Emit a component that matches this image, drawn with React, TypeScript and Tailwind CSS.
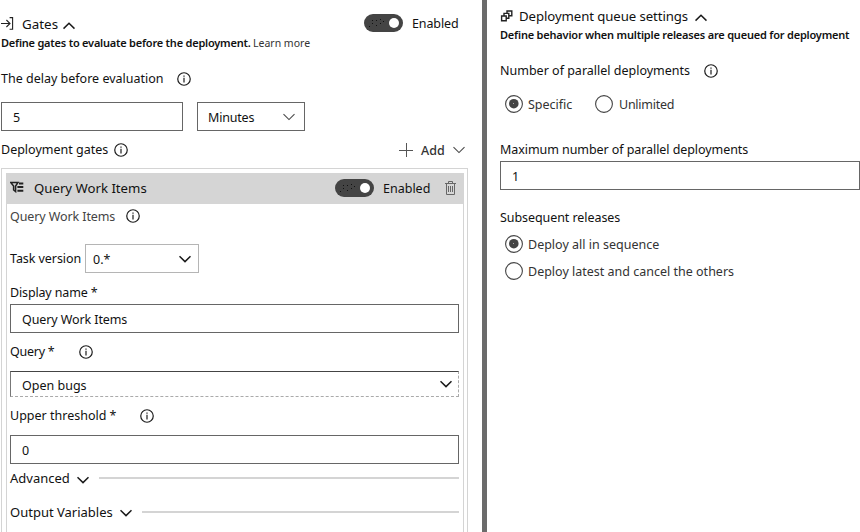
import type { ReactNode } from "react";

function Info({ className = "" }: { className?: string }) {
  return (
    <svg className={`h-[14px] w-[14px] shrink-0 ${className}`} viewBox="0 0 14 14" fill="none" stroke="#1c1c1c">
      <circle cx="7" cy="7" r="6.25" strokeWidth="1.2" />
      <path d="M7 5.8V10.4" strokeWidth="1.2" />
      <path d="M7 3.4V4.7" strokeWidth="1.2" />
    </svg>
  );
}

function Chevron({ up = false, light = false, className = "" }: { up?: boolean; light?: boolean; className?: string }) {
  return (
    <svg
      className={`h-[8px] w-[12px] shrink-0 ${className}`}
      viewBox="0 0 12 8"
      fill="none"
      stroke={light ? "#4a4a4a" : "#1a1a1a"}
      strokeWidth={light ? 1.1 : 1.5}
    >
      <path d={up ? "M0.5 6.6L6 1.2L11.5 6.6" : "M0.5 1.2L6 6.6L11.5 1.2"} />
    </svg>
  );
}

function Toggle({ className = "" }: { className?: string }) {
  return (
    <span className={`flex h-[18px] w-[39px] shrink-0 items-center justify-end rounded-full bg-[#444444] pr-1 ${className}`}>
      <svg className="mr-[4px] h-[10px] w-[17px]" viewBox="0 0 17 10" fill="#111111">
        {[[1, 8], [4, 2], [4, 5], [8, 2], [8, 7], [12, 1], [12, 5], [15, 3]].map(([x, y]) => (
          <rect key={`${x}-${y}`} x={x} y={y} width="1" height="1" />
        ))}
      </svg>
      <span className="h-[10px] w-[10px] rounded-full bg-white" />
    </span>
  );
}

function Field({ children, className = "" }: { children: ReactNode; className?: string }) {
  return <div className={`flex items-center border border-[#666666] pt-[3px] pl-[11px] ${className}`}>{children}</div>;
}

function Radio({ on = false }: { on?: boolean }) {
  return (
    <svg className="h-[18px] w-[18px] shrink-0" viewBox="0 0 18 18" fill="none">
      <circle cx="9" cy="9" r="8.4" stroke="#444444" strokeWidth="1.1" />
      {on && <circle cx="8.8" cy="8.7" r="4.8" fill="#444444" />}
      {on && <rect x="8" y="8" width="1" height="1" fill="#aaaaaa" />}
    </svg>
  );
}

function LeftPanel() {
  return (
    <section className="w-[482px] shrink-0 pt-[13px]">
      <div className="flex h-[22px] items-center pl-px">
        <svg className="mb-[2px] h-[13px] w-[13px] shrink-0" viewBox="0 0 13 13" fill="none" stroke="#222222" strokeWidth="1.1">
          <path d="M0 6.5H9M5.4 3L9 6.5L5.4 10M8.6 0.6H11.6V12.2H8.6" />
        </svg>
        <span className="ml-[8px] w-[41px] pt-px text-[13.4px]">Gates</span>
        <Chevron up className="mt-[3px]" />
        <Toggle className="mb-[3px] ml-[289px]" />
        <span className="ml-[9px] pt-px tracking-[-0.01em]">Enabled</span>
      </div>
      <div className="flex h-[15px] items-center pl-px text-[11px]">
        <span className="w-[252px] font-semibold tracking-[-0.22px]">Define gates to evaluate before the deployment.</span>
        <span className="pt-[2px] text-[10.5px] text-[#333333]">Learn more</span>
      </div>
      <div className="mt-[19px] flex h-5 items-center pl-px">
        <span className="w-[176px]">The delay before evaluation</span>
        <Info />
      </div>
      <div className="mt-[13px] flex gap-[14px] pl-px">
        <Field className="h-[29px] w-[182px]">5</Field>
        <Field className="h-[29px] w-[108px]">
          <span className="-ml-px w-[75px] tracking-[-0.2px]">Minutes</span>
          <Chevron light className="mb-[2px]" />
        </Field>
      </div>
      <div className="mt-[9px] flex h-5 items-center pl-px">
        <span className="w-[113px]">Deployment gates</span>
        <Info />
        <svg className="ml-[271px] h-[14px] w-[14px] shrink-0" viewBox="0 0 14 14" stroke="#555555">
          <path d="M0 7.5H14M7.5 0V14" />
        </svg>
        <span className="ml-[8px] w-[32px] pt-[3px] font-medium text-[#333333]">Add</span>
        <Chevron light />
      </div>
      <div className="mt-[8px] ml-px h-[380px] w-[467px] border border-[#d4d4d4] pt-[4px] pr-[3px] pl-[4px]">
        <GateCard />
      </div>
    </section>
  );
}

function GateCard() {
  return (
    <div>
      <div className="flex h-[31px] items-center bg-[#d5d5d5] pl-[4px]">
        <svg className="mb-[3px] h-[12px] w-[14px] shrink-0" viewBox="0 0 14 12" fill="none" stroke="#222222">
          <path d="M0.8 1.5H8L5.6 5V10.6L3.6 9V5Z" strokeWidth="1.5" />
          <path d="M9 2.5H13.3M7.4 6H13.3M7.4 9.7H13.3" strokeWidth="2" />
        </svg>
        <span className="ml-[10px] w-[301px] text-[13.2px]">Query Work Items</span>
        <Toggle className="mb-px" />
        <span className="ml-[9px] w-[62px] pt-[2px]">Enabled</span>
        <svg className="mb-[2px] h-[14px] w-[11px] shrink-0" viewBox="0 0 11 14" fill="none" stroke="#666666">
          <path d="M0 2.5H11M3.5 2V0.5H7.5V2M1.5 3V13.5H9.5V3M3.5 5V11M5.5 5V11M7.5 5V11" />
        </svg>
      </div>
      <div className="h-[340px] border-x border-[#d4d4d4] pr-[4px] pl-[3px]">
        <div className="flex h-[24px] items-center text-[#444444]">
          <span className="w-[116px] pt-[2px] tracking-[-0.1px]">Query Work Items</span>
          <Info className="mb-px" />
        </div>
        <div className="mt-[16px] flex h-[29px] items-center">
          <span className="w-[75px] pt-[2px] tracking-[-0.07px]">Task version</span>
          <div className="flex h-[29px] w-[114px] items-center border border-[#b5b5b5] pl-[7px]">
            <span className="w-[86px] pt-[3px]">0.*</span>
            <Chevron />
          </div>
        </div>
        <div className="mt-[10px] flex h-5 items-center tracking-[-0.15px]">Display name *</div>
        <Field className="mt-px h-[29px] tracking-[-0.1px]">Query Work Items</Field>
        <div className="mt-[9px] flex h-5 items-center">
          <span className="w-[69px] tracking-[-0.25px]">Query *</span>
          <Info />
        </div>
        <div className="mt-[9px] flex h-[26px] items-center border border-t-[#444444] border-r-[#aaaaaa] border-b-[#aaaaaa] border-l-[#777777] [border-style:solid_dashed_dashed_solid] pl-[11px]">
          <span className="w-[418px] pt-[4px]">Open bugs</span>
          <Chevron />
        </div>
        <div className="mt-[9px] flex h-5 items-center">
          <span className="w-[130px]">Upper threshold *</span>
          <Info />
        </div>
        <Field className="mt-[9px] h-[29px]">0</Field>
        <div className="mt-[4px] flex h-5 items-center">
          <span className="w-[67px] text-[13px]">Advanced</span>
          <Chevron className="mt-[3px]" />
          <span className="ml-[10px] h-[2px] flex-1 bg-[#d4d4d4]" />
        </div>
        <div className="mt-[14px] flex h-5 items-center">
          <span className="w-[110px] text-[13px]">Output Variables</span>
          <Chevron className="mt-[2px]" />
          <span className="ml-[10px] h-[2px] flex-1 bg-[#d4d4d4]" />
        </div>
      </div>
    </div>
  );
}

function RightPanel() {
  return (
    <section className="flex-1 pt-[6px] pl-[13px]">
      <div className="flex h-5 items-center">
        <svg className="h-[12px] w-[13px] shrink-0" viewBox="0 0 13 12" fill="none" stroke="#222222" strokeWidth="1.4">
          <path d="M1.6 6H6.2V10.8H1.6ZM4 5.8V3.4H8.8V8.2H6.4M7 3.2V1H11.8V5.8H9" />
        </svg>
        <span className="ml-[6px] w-[176px] pt-[2px] text-[13.2px] tracking-[-0.08px]">Deployment queue settings</span>
        <Chevron up className="mt-[3px]" />
      </div>
      <div className="flex h-[17px] items-center text-[11px] font-semibold tracking-[-0.2px]">
        Define behavior when multiple releases are queued for deployment
      </div>
      <div className="mt-[18px] flex h-5 items-center">
        <span className="w-[204px]">Number of parallel deployments</span>
        <Info />
      </div>
      <div className="mt-[13px] flex h-5 items-center pl-[5px] text-[#333333]">
        <Radio on />
        <span className="ml-[5px] w-[67px] pt-[2px]">Specific</span>
        <Radio />
        <span className="ml-[6px] pt-[2px] tracking-[-0.25px]">Unlimited</span>
      </div>
      <div className="mt-[26px] flex h-5 items-center tracking-[-0.07px]">Maximum number of parallel deployments</div>
      <Field className="mt-px h-[29px] w-[360px]">1</Field>
      <div className="mt-[18px] flex h-5 items-center tracking-[-0.07px]">Subsequent releases</div>
      <div className="mt-[6px] flex h-5 items-center pl-[5px] text-[#333333]">
        <Radio on />
        <span className="ml-[5px] pt-[2px]">Deploy all in sequence</span>
      </div>
      <div className="mt-[7px] flex h-5 items-center pl-[5px] text-[#333333]">
        <Radio />
        <span className="ml-[5px] pt-[2px]">Deploy latest and cancel the others</span>
      </div>
    </section>
  );
}

export default function App() {
  return (
    <main className="flex h-[532px] w-[860px] overflow-hidden bg-white font-['Noto_Sans',sans-serif] text-[12.5px] leading-none whitespace-nowrap text-[#111111]">
      <LeftPanel />
      <div className="w-[5px] shrink-0 bg-[#6b6b6b]" />
      <RightPanel />
    </main>
  );
}
